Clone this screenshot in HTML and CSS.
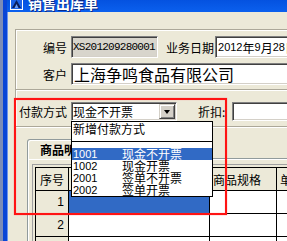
FILE: index.html
```html
<!DOCTYPE html>
<html lang="zh">
<head>
    <meta charset="UTF-8">
    <title>销售出库单</title>
    <link rel="stylesheet" href="styles.css">
</head>
<body>
<div class="screen">
    <div class="edge"></div>
    <div class="win">
        <div class="titlebar">
            <svg class="appicon" width="13" height="13" viewBox="0 0 13 13">
                <rect x="0.5" y="0.5" width="12" height="12" fill="#1d64e8" stroke="#fff"/>
                <path d="M2 11 L6.5 3 L11 11 Z" fill="#0b1f5c"/>
                <path d="M4.5 11 L6.5 7 L8.5 11 Z" fill="#6fa0f5"/>
            </svg>
            <span class="title">销售出库单</span>
        </div>
        <div class="client">
            <div class="group">
                <div class="row">
                    <label class="lbl">编号</label>
                    <div class="field ro">XS201209280001</div>
                    <label class="lbl lbl-date">业务日期</label>
                    <div class="field date"><span class="num">2012</span>年 <span class="num">9</span> 月<span class="num">28</span>日</div>
                </div>
                <div class="row">
                    <label class="lbl">客户</label>
                    <div class="field big">上海争鸣食品有限公司</div>
                </div>
                <div class="sep"></div>
                <div class="row row-pay">
                    <label class="lbl">付款方式</label>
                    <div class="combo">
                        <span class="combo-text">现金不开票</span>
                        <span class="drop-btn"></span>
                    </div>
                    <label class="lbl lbl-disc">折扣:</label>
                    <div class="field disc"></div>
                </div>
            </div>

            <div class="tabs">
                <div class="tab">商品明细</div>
            </div>
            <div class="panel">
                <div class="gridframe">
                    <div class="grid">
                        <div class="hd first">序号</div>
                        <div class="hd">商品名称</div>
                        <div class="hd">商品规格</div>
                        <div class="hd">单位</div>

                        <div class="rn"><span class="num">1</span></div>
                        <div class="sel"></div>
                        <div></div>
                        <div></div>

                        <div class="rn"><span class="num">2</span></div>
                        <div></div>
                        <div></div>
                        <div></div>

                        <div class="rn"></div>
                        <div></div>
                        <div></div>
                        <div></div>
                    </div>
                </div>
            </div>
        </div>
    </div>
</div>

<ul class="droplist">
    <li class="li-head">新增付款方式</li>
    <li class="li-sep"></li>
    <li class="on"><span class="code">1001</span>现金不开票</li>
    <li><span class="code">1002</span>现金开票</li>
    <li><span class="code">2001</span>签单不开票</li>
    <li><span class="code">2002</span>签单开票</li>
</ul>

<div class="mark"></div>
</body>
</html>
```

FILE: styles.css
```css
/* reset */
* {
    margin: 0;
    padding: 0;
    box-sizing: border-box;
}

body {
    width: 287px;
    height: 241px;
    overflow: hidden;
    position: relative;
    background-color: #ece9d8;
    color: #000;
    font-family: "Noto Sans CJK SC", sans-serif;
    font-size: 12px;
}

.num {
    font-family: "Liberation Sans", sans-serif;
    font-size: 11px;
}

.screen {
    display: flex;
    height: 241px;
}

.edge {
    width: 3px;
    flex: none;
    background-color: #7d8cb6;
}

.win {
    flex: none;
    width: 420px;
    border-left: 4px solid #0a45d6;
    display: flex;
    flex-direction: column;
}

/* title bar, top half is off screen */
.titlebar {
    height: 12px;
    flex: none;
    display: flex;
    align-items: flex-start;
    padding-left: 3px;
    overflow: hidden;
    color: #fff;
    background: linear-gradient(#0452e0, #0b60ee);
}

.appicon {
    flex: none;
    margin-top: -3px;
}

.title {
    margin-left: 5px;
    margin-top: -4px;
    font-size: 14px;
    line-height: 14px;
    font-weight: bold;
    text-shadow: 1px 1px #0b2a86;
}

.client {
    flex: 1;
    border-left: 1px solid #6b92ee;
    padding-left: 7px;
}

/* header group */
.group {
    margin-top: 17px;
    border-top: 1px solid #aca899;
    border-left: 1px solid #aca899;
    border-bottom: 1px solid #aca899;
    box-shadow: inset 1px 1px #fff, 0 1px #fff;
    padding: 6px 0 5px 0;
}

.row {
    display: flex;
    align-items: center;
    height: 22px;
}

.row + .row {
    margin-top: 5px;
}

.lbl {
    flex: none;
    width: 51px;
    margin-right: 4px;
    text-align: right;
    white-space: nowrap;
}

.lbl-date {
    width: auto;
    margin-left: 8px;
    margin-right: 1px;
}

.lbl-disc {
    width: auto;
    margin-left: 21px;
    margin-right: 7px;
}

.field {
    flex: none;
    height: 22px;
    display: flex;
    align-items: center;
    padding-left: 2px;
    white-space: nowrap;
    overflow: hidden;
    background-color: #fff;
    border-top: 1px solid #808080;
    border-left: 1px solid #808080;
    border-right: 1px solid #fff;
    border-bottom: 1px solid #fff;
    box-shadow: inset 1px 1px #404040, inset -1px -1px #d4d0c8;
}

.field.ro {
    width: 87px;
    padding-left: 1px;
    background-color: #d8d5cc;
    font-family: "Liberation Mono", monospace;
    font-size: 11px;
    letter-spacing: -0.75px;
}

.field.date {
    width: 100px;
}

.field.big {
    width: 240px;
    font-size: 16px;
}

.field.disc {
    width: 80px;
    height: 19px;
}

.sep {
    margin-top: 4px;
    border-top: 1px solid #aca899;
    border-bottom: 1px solid #fff;
}

.row-pay {
    margin-top: 11px;
    height: 19px;
}

.combo {
    flex: none;
    width: 106px;
    height: 19px;
    display: flex;
    align-items: center;
    justify-content: space-between;
    padding-left: 1px;
    padding-right: 1px;
    background-color: #fff;
    border-top: 1px solid #808080;
    border-left: 1px solid #808080;
    border-right: 1px solid #fff;
    border-bottom: 1px solid #fff;
    box-shadow: inset 1px 1px #404040, inset -1px -1px #d4d0c8;
}

.drop-btn {
    width: 16px;
    height: 15px;
    display: flex;
    align-items: center;
    justify-content: center;
    background-color: #d4d0c8;
    border: 1px solid;
    border-color: #d4d0c8 #404040 #404040 #d4d0c8;
    box-shadow: inset 1px 1px #fff, inset -1px -1px #808080;
}

.drop-btn::after {
    content: "";
    border-top: 4px solid #000;
    border-left: 3.5px solid transparent;
    border-right: 3.5px solid transparent;
}

/* tab + grid */
.tabs {
    display: flex;
    margin-top: 12px;
    margin-left: 12px;
}

.tab {
    position: relative;
    height: 20px;
    margin-bottom: -1px;
    padding: 0 10px 0 12px;
    display: flex;
    align-items: center;
    font-weight: bold;
    background-color: #ece9d8;
    border: 1px solid #919b9c;
    border-bottom: none;
    border-radius: 3px 3px 0 0;
    box-shadow: inset 1px 1px #fff;
}

.panel {
    margin-left: 12px;
    height: 90px;
    padding: 5px 0 0 4px;
    border-top: 1px solid #919b9c;
    border-left: 1px solid #919b9c;
    box-shadow: inset 1px 1px #fff;
}

.gridframe {
    padding: 2px 0 0 2px;
    border-top: 1px solid #a0a0a0;
    border-left: 1px solid #a0a0a0;
}

.grid {
    display: grid;
    grid-template-columns: 33px 141px 67px 80px;
    grid-auto-rows: 23px;
    border-top: 1px solid #000;
    border-left: 1px solid #000;
}

.grid > div {
    display: flex;
    align-items: center;
    white-space: nowrap;
    overflow: hidden;
    background-color: #fff;
    border-right: 1px solid #000;
    border-bottom: 1px solid #000;
}

.grid .hd {
    background-color: #ece9d8;
    padding-left: 3px;
}

.grid .hd.first {
    padding-left: 4px;
}

.grid .rn {
    background-color: #ece9d8;
    justify-content: flex-end;
    padding-right: 4px;
}

.grid .rn .num {
    font-size: 12px;
}

.grid .sel {
    background-color: #316ac5;
}

/* open dropdown of the combo */
.droplist {
    position: absolute;
    left: 71px;
    top: 121px;
    width: 142px;
    list-style: none;
    background-color: #fff;
    border: 1px solid #000;
}

.droplist li {
    height: 12px;
    line-height: 12px;
    display: flex;
    padding-left: 1px;
    white-space: nowrap;
    overflow: hidden;
}

.droplist .li-head {
    height: 13px;
    line-height: 13px;
}

.droplist .li-sep {
    height: 13px;
    align-items: center;
    padding-left: 0;
}

.droplist .li-sep::before {
    content: "";
    flex: 1;
    border-top: 1px solid #000;
}

.droplist li.on {
    background-color: #316ac5;
    color: #fff;
}

.code {
    width: 49px;
    flex: none;
    font-family: "Liberation Sans", sans-serif;
    font-size: 11px;
}

/* red annotation box */
.mark {
    position: absolute;
    left: 14px;
    top: 98px;
    width: 213px;
    height: 117px;
    border: 2px solid #ff1414;
    box-shadow: 0 0 1px rgba(255, 90, 90, 0.8), inset 0 0 1px rgba(255, 90, 90, 0.8);
}
```
